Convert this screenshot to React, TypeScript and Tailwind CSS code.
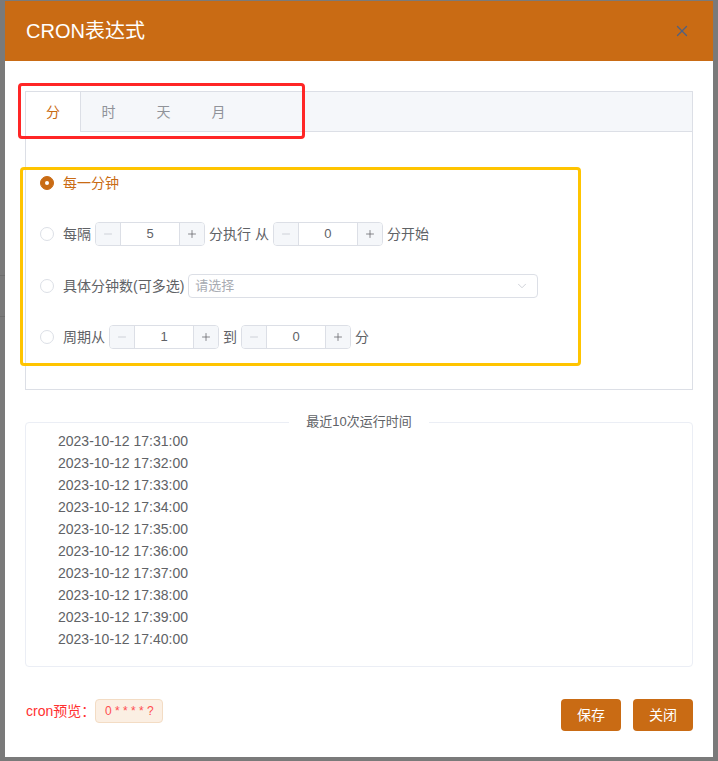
import { X, ChevronDown, Minus, Plus } from "lucide-react";

const font = { fontFamily: '"Liberation Sans", "Noto Sans CJK SC", sans-serif' };

const times = [
  "2023-10-12 17:31:00",
  "2023-10-12 17:32:00",
  "2023-10-12 17:33:00",
  "2023-10-12 17:34:00",
  "2023-10-12 17:35:00",
  "2023-10-12 17:36:00",
  "2023-10-12 17:37:00",
  "2023-10-12 17:38:00",
  "2023-10-12 17:39:00",
  "2023-10-12 17:40:00",
];

function Radio({ checked }: { checked?: boolean }) {
  return checked ? (
    <span className="w-[14px] h-[14px] rounded-full bg-[#c96b14] border border-[#c96b14] flex items-center justify-center shrink-0">
      <span className="w-[4px] h-[4px] rounded-full bg-white" />
    </span>
  ) : (
    <span className="w-[14px] h-[14px] rounded-full border border-[#dcdfe6] bg-white shrink-0" />
  );
}

function NumInput({ value }: { value: string }) {
  return (
    <div className="flex h-[24px] w-[110px] border border-[#dcdfe6] rounded-[4px] overflow-hidden bg-white mx-[4px]">
      <div className="w-[25px] bg-[#f5f7fa] border-r border-[#dcdfe6] flex items-center justify-center text-[#c0c4cc]">
        <Minus className="w-[12px] h-[12px]" strokeWidth={1.5} />
      </div>
      <div className="flex-1 flex items-center justify-center text-[13px] text-[#606266]">{value}</div>
      <div className="w-[25px] bg-[#f5f7fa] border-l border-[#dcdfe6] flex items-center justify-center text-[#606266]">
        <Plus className="w-[12px] h-[12px]" strokeWidth={1.5} />
      </div>
    </div>
  );
}

export default function App() {
  return (
    <div className="w-[718px] h-[761px] bg-[#7a7a7a] overflow-hidden relative" style={font}>
      <div className="absolute left-0 top-0 w-[5px] h-full">
        <div className="mt-[275px] h-px bg-[#6e6e6e]" />
        <div className="mt-[40px] h-px bg-[#6e6e6e]" />
      </div>

      <div className="ml-[5px] mt-[1px] w-[708px] h-[756px] bg-white flex flex-col relative">
        {/* Header */}
        <div className="h-[60px] bg-[#c96b14] flex items-center justify-between pl-[21px] pr-[22px]">
          <span className="text-white text-[20px]">CRON表达式</span>
          <X className="w-[18px] h-[18px] text-[#4d6185]" strokeWidth={1.6} />
        </div>

        <div className="px-[20px] pt-[30px] flex flex-col">
          {/* Tabs */}
          <div className="border border-[#dcdfe6] h-[299px] flex flex-col">
            <div className="h-[40px] bg-[#f5f7fa] border-b border-[#dcdfe6] flex">
              <div className="w-[55px] h-[40px] bg-white border-r border-[#dcdfe6] flex items-center justify-center text-[14px] text-[#c96b14]">
                分
              </div>
              {["时", "天", "月"].map((t) => (
                <div key={t} className="w-[55px] h-[40px] flex items-center justify-center text-[14px] text-[#909399]">
                  {t}
                </div>
              ))}
            </div>
            <div className="pl-[14px] pt-[39px] flex flex-col text-[14px] text-[#606266]">
              <div className="flex items-center h-[24px]">
                <Radio checked />
                <span className="ml-[9px] text-[#c96b14]">每一分钟</span>
              </div>
              <div className="flex items-center h-[24px] mt-[27px]">
                <Radio />
                <span className="ml-[9px]">每隔</span>
                <NumInput value="5" />
                <span>分执行 从</span>
                <NumInput value="0" />
                <span>分开始</span>
              </div>
              <div className="flex items-center h-[24px] mt-[28px]">
                <Radio />
                <span className="ml-[9px]">具体分钟数(可多选)</span>
                <div className="ml-[4px] w-[350px] h-[24px] border border-[#dcdfe6] rounded-[4px] flex items-center justify-between pl-[6px] pr-[8px]">
                  <span className="text-[13px] text-[#a8abb2]">请选择</span>
                  <ChevronDown className="w-[14px] h-[14px] text-[#c0c4cc]" strokeWidth={1.3} />
                </div>
              </div>
              <div className="flex items-center h-[24px] mt-[27px]">
                <Radio />
                <span className="ml-[9px]">周期从</span>
                <NumInput value="1" />
                <span>到</span>
                <NumInput value="0" />
                <span>分</span>
              </div>
            </div>
          </div>

          {/* Run times */}
          <div className="mt-[32px] border border-[#ebeef5] rounded-[4px] h-[245px] relative pl-[32px] pt-[7px]">
            <div className="absolute left-0 right-0 -top-[10px] flex justify-center">
              <span className="bg-white px-[17px] text-[13px] leading-[18px] text-[#606266]">最近10次运行时间</span>
            </div>
            {times.map((t) => (
              <div key={t} className="text-[14px] leading-[22px] text-[#606266]">
                {t}
              </div>
            ))}
          </div>

          {/* Footer */}
          <div className="mt-[32px] flex items-start justify-between">
            <div className="flex items-center h-[24px]">
              <span className="text-[14px] text-[#ff3030] pl-[1px]">cron预览：</span>
              <span className="h-[24px] w-[68px] bg-[#fbefe3] border border-[#f3dcc4] rounded-[4px] flex items-center justify-center text-[12px] text-[#ff4d4f]">
                0 * * * * ?
              </span>
            </div>
            <div className="flex gap-[12px]">
              <button className="w-[60px] h-[32px] bg-[#c96b14] rounded-[4px] text-white text-[14px]">保存</button>
              <button className="w-[60px] h-[32px] bg-[#c96b14] rounded-[4px] text-white text-[14px]">关闭</button>
            </div>
          </div>
        </div>
      </div>

      {/* annotation boxes */}
      <div className="absolute left-[18px] top-[83px] w-[287px] h-[56px] border-[3px] border-[#ff2626] rounded-[4px]" />
      <div className="absolute left-[20px] top-[167px] w-[561px] h-[199px] border-[3px] border-[#ffc400] rounded-[4px]" />
    </div>
  );
}
